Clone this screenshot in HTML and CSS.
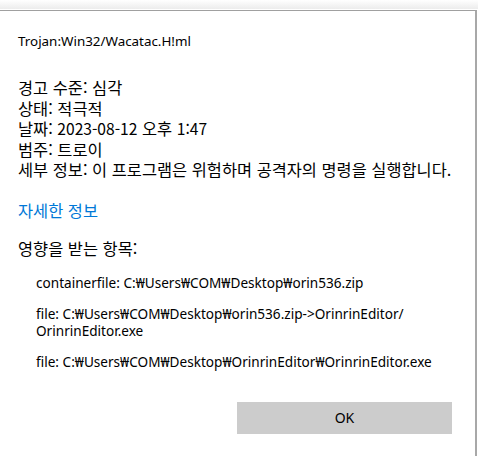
FILE: index.html
```html
<!DOCTYPE html>
<html lang="ko">
<head>
<meta charset="utf-8">
<link rel="stylesheet" href="styles.css">
</head>
<body>
<div class="dialog">
  <p class="threat">Trojan:Win32/Wacatac.H!ml</p>
  <div class="info">
    <div>경고 수준: 심각</div>
    <div>상태: 적극적</div>
    <div>날짜: <span class="num">2023-08-12</span> 오후 <span class="num">1:47</span></div>
    <div>범주: 트로이</div>
    <div>세부 정보: 이 프로그램은 위험하며 공격자의 명령을 실행합니다.</div>
  </div>
  <a class="more">자세한 정보</a>
  <div class="affected">영향을 받는 항목:</div>
  <ul class="items">
    <li>containerfile: C:₩Users₩COM₩Desktop₩orin536.zip</li>
    <li>file: C:₩Users₩COM₩Desktop₩orin536.zip-&gt;OrinrinEditor/<br>OrinrinEditor.exe</li>
    <li>file: C:₩Users₩COM₩Desktop₩OrinrinEditor₩OrinrinEditor.exe</li>
  </ul>
  <div class="actions"><button class="ok">OK</button></div>
</div>
</body>
</html>
```
FILE: styles.css
```css
html, body {
  margin: 0;
  padding: 0;
  background: #fff;
}
body {
  width: 478px;
  height: 456px;
  overflow: hidden;
  background: linear-gradient(to bottom, #ffffff 0px, #ececec 9px, #ffffff 9px);
  font-family: "Noto Sans", "Noto Sans CJK KR", sans-serif;
  color: #000;
}
.dialog {
  box-sizing: border-box;
  margin-top: 10px;
  width: 477px;
  height: 446px;
  background: #fff;
  border-top: 1px solid #a0a0a0;
  border-right: 2px solid #a8a8a8;
  padding: 0 0 0 18px;
}
.threat {
  margin: 21px 0 0;
  font-size: 13.4px;
  line-height: 18px;
}
.info {
  margin-top: 27px;
  font-family: "Noto Sans CJK KR", sans-serif;
  font-size: 16.4px;
  line-height: 20.5px;
}
.num {
  font-size: 15.6px;
}
.more {
  display: block;
  margin-top: 20px;
  font-family: "Noto Sans CJK KR", sans-serif;
  font-size: 16.4px;
  line-height: 20px;
  color: #0078d7;
}
.affected {
  margin-top: 18px;
  font-family: "Noto Sans CJK KR", sans-serif;
  font-size: 16.4px;
  line-height: 20px;
}
.items {
  list-style: none;
  margin: 16px 0 0;
  padding: 0 0 0 18px;
  font-size: 13.6px;
  line-height: 17px;
}
.items li {
  margin-bottom: 14px;
}
.actions {
  display: flex;
  justify-content: flex-end;
  padding-right: 23px;
  margin-top: 32px;
}
.ok {
  width: 215px;
  height: 32px;
  border: none;
  background: #cccccc;
  font-family: "Noto Sans", sans-serif;
  font-size: 14px;
  color: #000;
}
```
